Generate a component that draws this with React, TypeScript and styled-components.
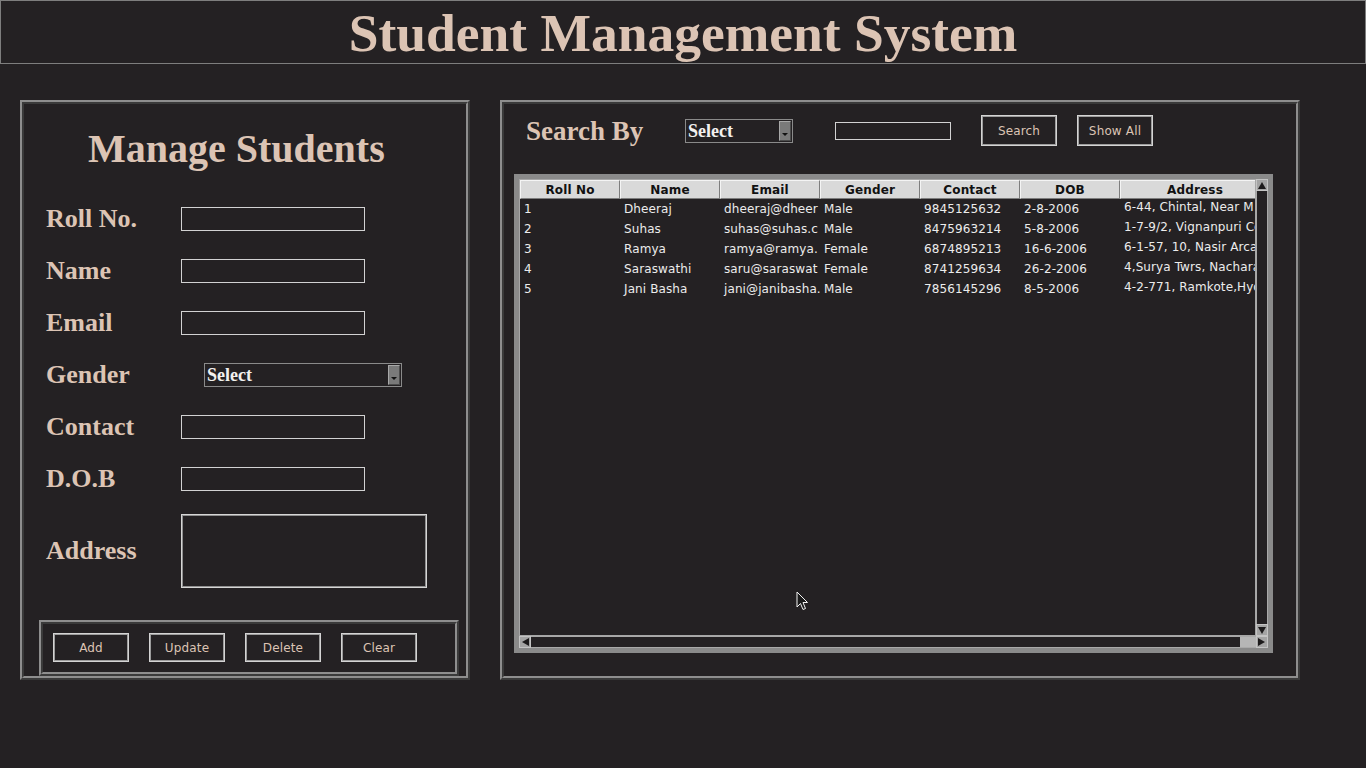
import React from 'react'
import styled, { createGlobalStyle } from 'styled-components'

const serif = `"Liberation Serif", "DejaVu Serif", serif`
const sans = `"DejaVu Sans", "Liberation Sans", sans-serif`
const beige = '#dcc4b4'
const bg = '#242123'

const GlobalStyle = createGlobalStyle`
  html, body {
    margin: 0;
    padding: 0;
    background: ${bg};
  }
  body {
    width: 1366px;
    height: 768px;
    overflow: hidden;
    font-family: ${sans};
  }
`

type Student = [string, string, string, string, string, string, string]

const students: Student[] = [
  ['1', 'Dheeraj', 'dheeraj@dheer', 'Male', '9845125632', '2-8-2006', '6-44, Chintal, Near M'],
  ['2', 'Suhas', 'suhas@suhas.c', 'Male', '8475963214', '5-8-2006', '1-7-9/2, Vignanpuri Colony'],
  ['3', 'Ramya', 'ramya@ramya.', 'Female', '6874895213', '16-6-2006', '6-1-57, 10, Nasir Arcade'],
  ['4', 'Saraswathi', 'saru@saraswat', 'Female', '8741259634', '26-2-2006', '4,Surya Twrs, Nacharam'],
  ['5', 'Jani Basha', 'jani@janibasha.', 'Male', '7856145296', '8-5-2006', '4-2-771, Ramkote,Hyderabad'],
]

const columns = [
  { title: 'Roll No', width: 100 },
  { title: 'Name', width: 100 },
  { title: 'Email', width: 100 },
  { title: 'Gender', width: 100 },
  { title: 'Contact', width: 100 },
  { title: 'DOB', width: 100 },
  { title: 'Address', width: 150 },
]

const fields = ['Roll No.', 'Name', 'Email', 'Gender', 'Contact', 'D.O.B']

type Dir = 'up' | 'down' | 'left' | 'right'

const arrowPoints: Record<Dir, string> = {
  up: '5,2 9,9 1,9',
  down: '1,2 9,2 5,9',
  left: '2,5 9,1 9,9',
  right: '1,1 8,5 1,9',
}

const ScrollArrow = ({ dir }: { dir: Dir }) => (
  <ArrowBox>
    <svg width="10" height="10" viewBox="0 0 10 10">
      <polygon points={arrowPoints[dir]} fill="#1c1a1b" />
    </svg>
  </ArrowBox>
)

const Combo = ({ width }: { width: number }) => (
  <ComboBox $width={width}>
    <ComboText>Select</ComboText>
    <ComboButton>
      <svg width="6" height="4" viewBox="0 0 6 4">
        <polygon points="0,0 6,0 3,3" fill="#111" />
      </svg>
    </ComboButton>
  </ComboBox>
)

const Cursor = () => (
  <CursorMark width="13" height="20" viewBox="0 0 13 20">
    <path
      d="M1 1 L1 16 L4.5 12.5 L7 18.5 L9.5 17.5 L7 11.5 L11.5 11.5 Z"
      fill="#1b1b1b"
      stroke="#f2f2f2"
      strokeWidth="1"
      strokeLinejoin="round"
    />
  </CursorMark>
)

const App = () => {
  return (
    <Page>
      <GlobalStyle />
      <TitleBar>
        <Title>Student Management System</Title>
      </TitleBar>

      <Main>
        <LeftPanel>
          <PanelHeading>Manage Students</PanelHeading>
          <Form>
            {fields.map((field) => (
              <FormRow key={field}>
                <FieldLabel>{field}</FieldLabel>
                {field === 'Gender' ? (
                  <GenderSlot>
                    <Combo width={198} />
                  </GenderSlot>
                ) : (
                  <TextInput />
                )}
              </FormRow>
            ))}
            <FormRow $tall>
              <FieldLabel>Address</FieldLabel>
              <AddressBox />
            </FormRow>
          </Form>
          <ButtonFrame>
            {['Add', 'Update', 'Delete', 'Clear'].map((label) => (
              <ActionButton key={label} $height={29}>
                {label}
              </ActionButton>
            ))}
          </ButtonFrame>
        </LeftPanel>

        <RightPanel>
          <SearchRow>
            <SearchLabel>Search By</SearchLabel>
            <Combo width={108} />
            <SearchInput />
            <ButtonGroup>
              <ActionButton $height={31}>Search</ActionButton>
              <ActionButton $height={31}>Show All</ActionButton>
            </ButtonGroup>
          </SearchRow>

          <TableFrame>
            <Tree>
              <HeaderRow>
                {columns.map((col) => (
                  <HeaderCell key={col.title} $width={col.width}>
                    {col.title}
                  </HeaderCell>
                ))}
              </HeaderRow>
              {students.map((row) => (
                <BodyRow key={row[0]}>
                  {row.map((value, i) => (
                    <BodyCell key={i} $width={columns[i].width} $lifted={i === 6}>
                      {value}
                    </BodyCell>
                  ))}
                </BodyRow>
              ))}
            </Tree>
            <VScroll>
              <ScrollArrow dir="up" />
              <VTrough />
              <ScrollArrow dir="down" />
            </VScroll>
            <HScroll>
              <ScrollArrow dir="left" />
              <HTrough>
                <HThumb />
              </HTrough>
              <ScrollArrow dir="right" />
            </HScroll>
          </TableFrame>
        </RightPanel>
      </Main>

      <Cursor />
    </Page>
  )
}

export default App

const Page = styled.div`
  position: relative;
  width: 1366px;
  height: 768px;
  background: ${bg};
`

const TitleBar = styled.header`
  display: flex;
  justify-content: center;
  height: 64px;
  box-sizing: border-box;
  border: 1px solid #7e7e7e;
`

const Title = styled.h1`
  margin: 0;
  font-family: ${serif};
  font-weight: bold;
  font-size: 53.5px;
  line-height: 64px;
  color: ${beige};
  white-space: nowrap;
`

const Main = styled.main`
  display: flex;
  align-items: flex-start;
  gap: 30px;
  padding: 36px 0 0 20px;
`

const Panel = styled.section`
  box-sizing: border-box;
  height: 580px;
  border: 4px ridge #8e8e8e;
`

const LeftPanel = styled(Panel)`
  width: 450px;
  display: flex;
  flex-direction: column;
`

const RightPanel = styled(Panel)`
  width: 800px;
  display: flex;
  flex-direction: column;
`

const PanelHeading = styled.h2`
  margin: 23px 0 0 64px;
  font-family: ${serif};
  font-weight: bold;
  font-size: 40px;
  line-height: 44px;
  color: ${beige};
  white-space: nowrap;
`

const Form = styled.div`
  display: flex;
  flex-direction: column;
  margin-top: 22px;
  padding-left: 22px;
`

const FormRow = styled.div<{ $tall?: boolean }>`
  display: grid;
  grid-template-columns: 135px auto;
  align-items: center;
  justify-content: start;
  height: ${({ $tall }) => ($tall ? 92 : 52)}px;
`

const FieldLabel = styled.label`
  font-family: ${serif};
  font-weight: bold;
  font-size: 26px;
  line-height: 30px;
  color: ${beige};
  white-space: nowrap;
`

const TextInput = styled.div`
  box-sizing: border-box;
  width: 184px;
  height: 24px;
  border: 1px solid #d2d2d2;
  background: ${bg};
`

const AddressBox = styled.div`
  box-sizing: border-box;
  width: 246px;
  height: 74px;
  border: 1px solid #d6d6d6;
  box-shadow: inset 0 0 0 1px #8f8f8f;
  background: ${bg};
`

const GenderSlot = styled.div`
  margin-left: 23px;
`

const ComboBox = styled.div<{ $width: number }>`
  box-sizing: border-box;
  display: flex;
  align-items: center;
  width: ${({ $width }) => $width}px;
  height: 24px;
  padding: 0 1px 0 2px;
  border: 1px solid #8a8a8a;
  background: ${bg};
`

const ComboText = styled.span`
  flex: 1;
  font-family: ${serif};
  font-weight: bold;
  font-size: 18px;
  line-height: 20px;
  color: #f2f0ee;
`

const ComboButton = styled.span`
  box-sizing: border-box;
  display: flex;
  align-items: flex-end;
  justify-content: center;
  width: 12px;
  height: 20px;
  padding-bottom: 3px;
  background: #7a7a7a;
  border-top: 1px solid #a8a8a8;
  border-left: 1px solid #a8a8a8;
  border-right: 1px solid #4c4c4c;
  border-bottom: 1px solid #4c4c4c;
`

const ButtonFrame = styled.div`
  box-sizing: border-box;
  display: flex;
  gap: 20px;
  width: 420px;
  height: 56px;
  margin: 23px 0 0 15px;
  padding: 9px 0 0 10px;
  border: 4px ridge #8e8e8e;
`

const ActionButton = styled.button<{ $height: number }>`
  box-sizing: border-box;
  width: 76px;
  height: ${({ $height }) => $height}px;
  padding: 0;
  border: 1px solid #d4d4d4;
  box-shadow: inset 0 0 0 1px #9c9c9c;
  background: ${bg};
  color: ${beige};
  font-family: ${sans};
  font-size: 12px;
  letter-spacing: 0.15px;
`

const SearchRow = styled.div`
  display: flex;
  align-items: center;
  height: 31px;
  margin-top: 11px;
  padding-left: 22px;
`

const SearchLabel = styled.span`
  width: 159px;
  font-family: ${serif};
  font-weight: bold;
  font-size: 27px;
  line-height: 30px;
  color: ${beige};
  white-space: nowrap;
`

const SearchInput = styled.div`
  box-sizing: border-box;
  width: 116px;
  height: 18px;
  margin: 0 30px 0 42px;
  border: 1px solid #d2d2d2;
`

const ButtonGroup = styled.div`
  display: flex;
  gap: 20px;
`

const TableFrame = styled.div`
  box-sizing: border-box;
  display: grid;
  grid-template-columns: 1fr 12px;
  grid-template-rows: 1fr 12px;
  width: 759px;
  height: 479px;
  margin: 28px 0 0 10px;
  border: 5px solid #8a8a8a;
  box-shadow: inset 0 0 0 1px #a4a4a4;
`

const Tree = styled.div`
  box-sizing: border-box;
  overflow: hidden;
  border: 1px solid #a6a6a6;
  background: ${bg};
`

const HeaderRow = styled.div`
  display: flex;
  height: 19px;
`

const HeaderCell = styled.div<{ $width: number }>`
  box-sizing: border-box;
  flex: 0 0 ${({ $width }) => $width}px;
  height: 19px;
  padding-top: 1px;
  border-top: 1px solid #f4f4f4;
  border-left: 1px solid #f4f4f4;
  border-right: 1px solid #7d7d7d;
  border-bottom: 1px solid #7d7d7d;
  background: #d9d9d9;
  color: #111;
  font-family: ${sans};
  font-weight: bold;
  font-size: 12px;
  letter-spacing: 0.15px;
  line-height: 16px;
  text-align: center;
  white-space: nowrap;
  overflow: hidden;
`

const BodyRow = styled.div`
  display: flex;
  height: 20px;
`

const BodyCell = styled.div<{ $width: number; $lifted?: boolean }>`
  box-sizing: border-box;
  flex: 0 0 ${({ $width }) => $width}px;
  height: 20px;
  padding-left: 4px;
  color: #ececec;
  font-family: ${sans};
  font-size: 12px;
  letter-spacing: 0.1px;
  line-height: ${({ $lifted }) => ($lifted ? 16 : 20)}px;
  white-space: nowrap;
  overflow: hidden;
`

const VScroll = styled.div`
  display: flex;
  flex-direction: column;
  background: ${bg};
`

const VTrough = styled.div`
  flex: 1;
  box-sizing: border-box;
  border-left: 1px solid #a9a9a9;
  border-right: 1px solid #a9a9a9;
`

const HScroll = styled.div`
  grid-column: 1 / 3;
  display: flex;
  background: ${bg};
`

const HTrough = styled.div`
  flex: 1;
  display: flex;
  justify-content: flex-end;
  box-sizing: border-box;
  border-top: 1px solid #a9a9a9;
  border-bottom: 1px solid #a9a9a9;
`

const HThumb = styled.div`
  width: 16px;
  background: #b6b6b6;
`

const ArrowBox = styled.div`
  box-sizing: border-box;
  display: flex;
  align-items: center;
  justify-content: center;
  flex: 0 0 12px;
  width: 12px;
  height: 12px;
  background: #a4a4a4;
  border: 1px solid #c4c4c4;
`

const CursorMark = styled.svg`
  position: absolute;
  left: 796px;
  top: 591px;
`
